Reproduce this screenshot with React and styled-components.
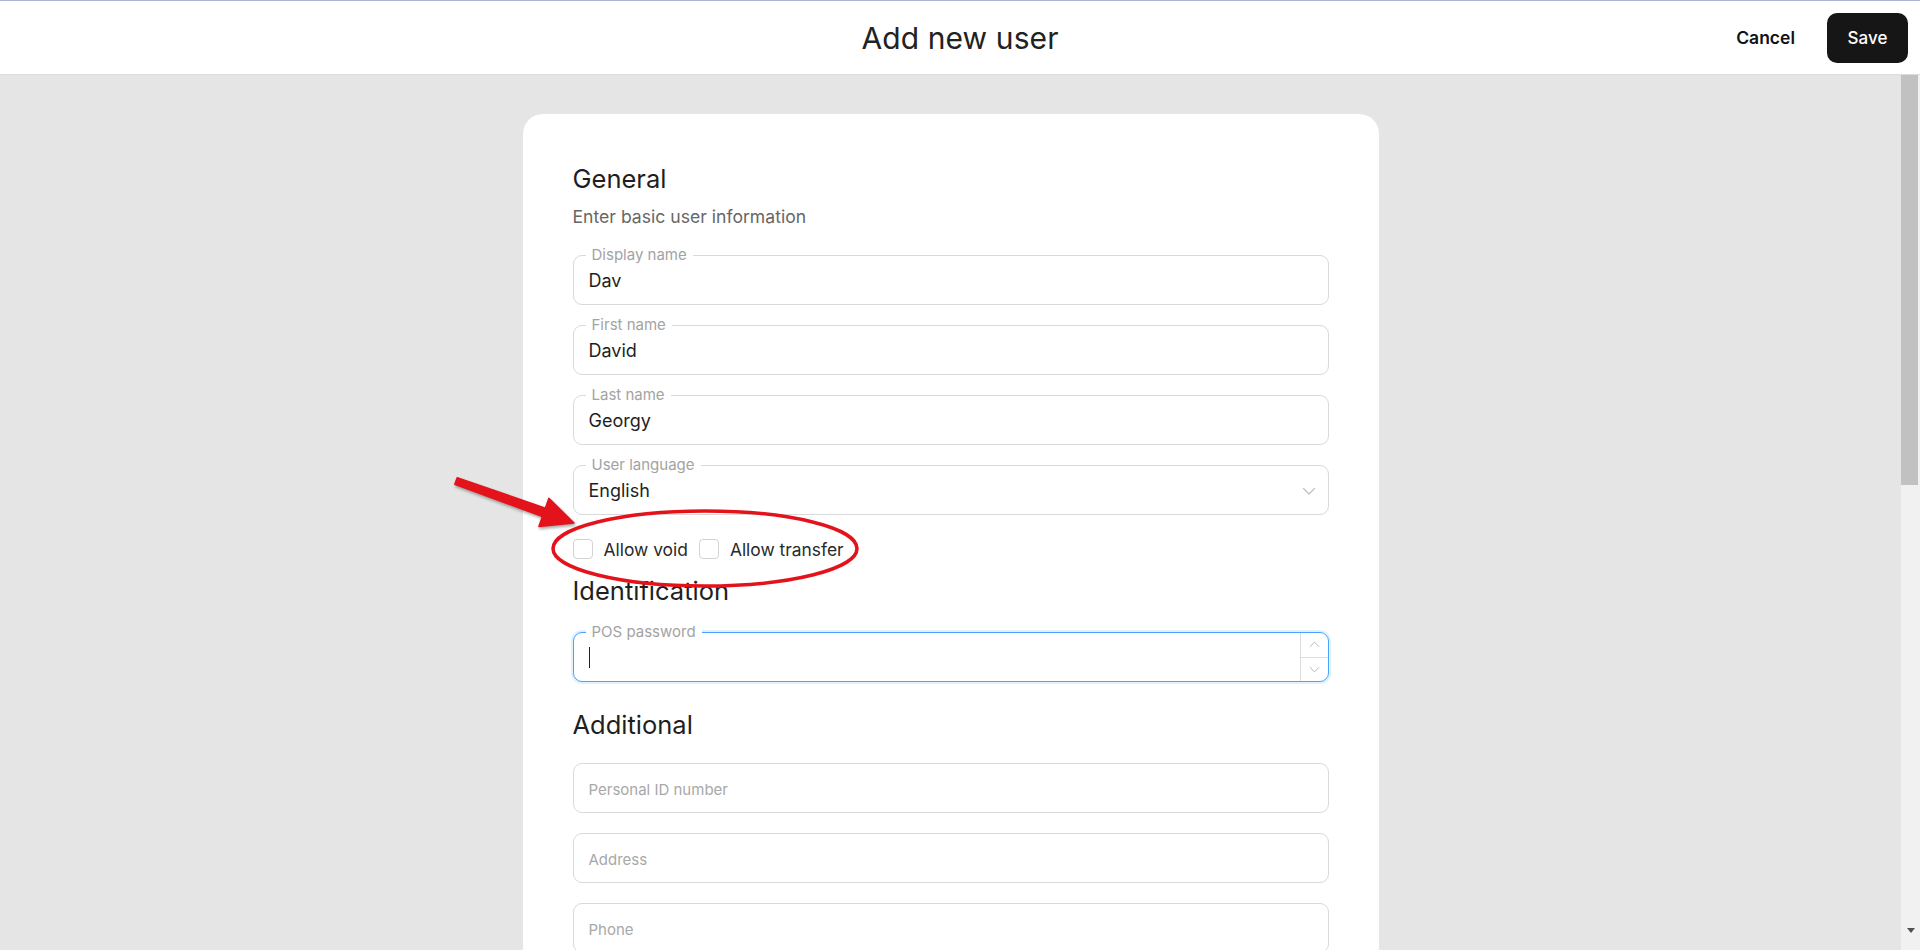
import React from 'react';
import styled, { createGlobalStyle } from 'styled-components';

const GlobalStyle = createGlobalStyle`
  * {
    margin: 0;
    padding: 0;
    box-sizing: border-box;
  }
  html, body {
    height: 100%;
    overflow: hidden;
  }
  body {
    font-family: Inter, 'Noto Sans', sans-serif;
    color: #1f1f1f;
    background: #e5e5e5;
  }
`;

const general = [
  { label: 'Display name', value: 'Dav' },
  { label: 'First name', value: 'David' },
  { label: 'Last name', value: 'Georgy' },
  { label: 'User language', value: 'English', select: true },
];

const additional = [
  'Personal ID number',
  'Address',
  'Phone',
  'Email',
  'City',
  'Postal code',
  'Country',
  'Date of birth',
  'Note',
];

const employment = ['Position', 'Department', 'Hire date', 'Hourly rate', 'Employee number'];

const ChevronDown = ({ size = 14, color = '#bdbdbd' }) => (
  <svg width={size} height={size} viewBox="0 0 14 14" fill="none">
    <path d="M1.5 4.5 L7 10 L12.5 4.5" stroke={color} strokeWidth="1.1" strokeLinecap="round" strokeLinejoin="round" />
  </svg>
);

const ChevronUp = ({ size = 14, color = '#bdbdbd' }) => (
  <svg width={size} height={size} viewBox="0 0 14 14" fill="none">
    <path d="M1.5 9.5 L7 4 L12.5 9.5" stroke={color} strokeWidth="1.1" strokeLinecap="round" strokeLinejoin="round" />
  </svg>
);

const Field = ({ label, value, placeholder, select, stepper, focused }) => (
  <FieldBox $focused={focused}>
    {label && <FloatLabel>{label}</FloatLabel>}
    {focused && <Caret />}
    <Input defaultValue={value} placeholder={placeholder} readOnly={select} />
    {select && (
      <SelectIcon>
        <ChevronDown />
      </SelectIcon>
    )}
    {stepper && (
      <Stepper>
        <StepButton>
          <ChevronUp size={11} color="#aaa" />
        </StepButton>
        <StepButton $bottom>
          <ChevronDown size={11} color="#aaa" />
        </StepButton>
      </Stepper>
    )}
  </FieldBox>
);

const App = () => {
  return (
    <>
      <GlobalStyle />
      <Page>
        <Header>
          <span />
          <Title>Add new user</Title>
          <Actions>
            <TextButton>Cancel</TextButton>
            <PrimaryButton>Save</PrimaryButton>
          </Actions>
        </Header>
        <Body>
          <Main>
            <Card>
              <SectionTitle>General</SectionTitle>
              <Subtitle>Enter basic user information</Subtitle>
              <FieldList $top={28}>
                {general.map((f) => (
                  <Field key={f.label} {...f} />
                ))}
              </FieldList>
              <CheckRow>
                <CheckItem>
                  <CheckBox />
                  Allow void
                </CheckItem>
                <CheckItem>
                  <CheckBox />
                  Allow transfer
                </CheckItem>
              </CheckRow>

              <SectionTitle $top={17}>Identification</SectionTitle>
              <FieldList $top={27}>
                <Field label="POS password" stepper focused />
              </FieldList>

              <SectionTitle $top={28}>Additional</SectionTitle>
              <FieldList $top={24}>
                {additional.map((p) => (
                  <Field key={p} placeholder={p} />
                ))}
              </FieldList>

              <SectionTitle $top={28}>Employment</SectionTitle>
              <FieldList $top={24}>
                {employment.map((p) => (
                  <Field key={p} placeholder={p} />
                ))}
              </FieldList>

              {/* red annotation drawn over the checkboxes */}
              <Annotation width="1" height="1">
                <ellipse cx="182" cy="434.5" rx="152" ry="37.5" fill="none" stroke="#e4131b" strokeWidth="3.5" />
                <polygon
                  className="arrow"
                  points="-65.8,363.7 22.4,394.1 25.9,384.2 51,409 15.9,412.4 19.4,402.5 -68.2,370.3"
                  fill="#e4131b"
                  stroke="#e4131b"
                  strokeWidth="1.5"
                  strokeLinejoin="round"
                />
              </Annotation>
            </Card>
          </Main>
          <ScrollRail>
            <ScrollThumb />
            <ScrollArrow />
          </ScrollRail>
        </Body>
      </Page>
    </>
  );
};

const Page = styled.div`
  height: 100vh;
  display: flex;
  flex-direction: column;
`;

const Header = styled.header`
  height: 75px;
  flex-shrink: 0;
  display: grid;
  grid-template-columns: 1fr auto 1fr;
  align-items: center;
  background: #fff;
  border-top: 1px solid #a9b5d1;
  border-bottom: 1px solid #dcdcdc;
  padding: 0 12px;
`;

const Title = styled.h1`
  font-size: 30px;
  font-weight: 400;
  color: #222;
  letter-spacing: 0.1px;
`;

const Actions = styled.div`
  justify-self: end;
  display: flex;
  align-items: center;
  gap: 16px;
`;

const TextButton = styled.button`
  height: 50px;
  padding: 0 16px;
  border: none;
  background: transparent;
  font-family: Inter, sans-serif;
  font-size: 17.5px;
  font-weight: 600;
  color: #111;
  cursor: pointer;
`;

const PrimaryButton = styled.button`
  width: 81px;
  height: 50px;
  border: none;
  border-radius: 10px;
  background: #161616;
  color: #fff;
  font-family: Inter, sans-serif;
  font-size: 17px;
  font-weight: 500;
  cursor: pointer;
`;

const Body = styled.div`
  flex: 1;
  min-height: 0;
  display: flex;
`;

const Main = styled.main`
  flex: 1;
  overflow: hidden;
  background: #e5e5e5;
  padding: 39px 0 72px;
`;

const ScrollRail = styled.div`
  width: 19px;
  flex-shrink: 0;
  display: flex;
  flex-direction: column;
  background: #f1f1f1;
  padding-right: 2px;
`;

const ScrollThumb = styled.div`
  height: 410px;
  background: #c1c1c1;
`;

const ScrollArrow = styled.div`
  margin-top: auto;
  margin-bottom: 17px;
  align-self: center;
  width: 0;
  height: 0;
  border-left: 4.5px solid transparent;
  border-right: 4.5px solid transparent;
  border-top: 5px solid #505050;
  transform: translateX(1px);
`;

const Card = styled.section`
  position: relative;
  width: 856px;
  margin: 0 auto;
  background: #fff;
  border-radius: 20px;
  padding: 50px;
  display: flex;
  flex-direction: column;
`;

const SectionTitle = styled.h2`
  font-size: 25.5px;
  line-height: 29px;
  font-weight: 400;
  color: #1f1f1f;
  margin-top: ${(p) => p.$top || 0}px;
`;

const Subtitle = styled.p`
  margin-top: 14px;
  font-size: 17.6px;
  line-height: 20px;
  color: #666;
`;

const FieldList = styled.div`
  display: flex;
  flex-direction: column;
  gap: 20px;
  margin-top: ${(p) => p.$top || 0}px;
`;

const FieldBox = styled.div`
  position: relative;
  height: 50px;
  display: flex;
  align-items: center;
  border: 1px solid ${(p) => (p.$focused ? '#4aa3ff' : '#d9d9d9')};
  border-radius: 9px;
  background: #fff;
  box-shadow: ${(p) => (p.$focused ? '0 0 0 2px rgba(5, 145, 255, 0.12)' : 'none')};
`;

const FloatLabel = styled.span`
  position: absolute;
  top: -10px;
  left: 12px;
  padding: 0 6px;
  background: #fff;
  font-size: 15px;
  line-height: 17px;
  color: #a3a3a3;
`;

const Caret = styled.span`
  width: 1px;
  height: 21px;
  margin-left: 15px;
  background: #222;
  flex-shrink: 0;
`;

const Input = styled.input`
  flex: 1;
  min-width: 0;
  height: 100%;
  border: none;
  outline: none;
  background: transparent;
  padding: 0 15px;
  font-family: Inter, sans-serif;
  font-size: 18px;
  color: #1f1f1f;

  &::placeholder {
    color: #a8a8a8;
    font-size: 15px;
  }
`;

const SelectIcon = styled.span`
  display: flex;
  margin-right: 12px;
  margin-top: 2px;
`;

const Stepper = styled.div`
  width: 28px;
  height: 100%;
  display: flex;
  flex-direction: column;
  border-left: 1px solid #dcdcdc;
`;

const StepButton = styled.span`
  flex: 1;
  display: flex;
  align-items: center;
  justify-content: center;
  border-top: ${(p) => (p.$bottom ? '1px solid #dcdcdc' : 'none')};
`;

const CheckRow = styled.div`
  margin-top: 24px;
  height: 20px;
  display: flex;
  align-items: center;
  gap: 11px;
`;

const CheckItem = styled.label`
  display: flex;
  align-items: center;
  gap: 11px;
  font-size: 17.4px;
  color: #2a2a2a;
`;

const CheckBox = styled.span`
  width: 20px;
  height: 20px;
  border: 1px solid #d3d3d3;
  border-radius: 4px;
  background: #fff;
`;

const Annotation = styled.svg`
  position: absolute;
  left: 0;
  top: 0;
  overflow: visible;
  pointer-events: none;

  .arrow {
    filter: drop-shadow(1px 2px 1.5px rgba(0, 0, 0, 0.35));
  }
`;

export default App;
